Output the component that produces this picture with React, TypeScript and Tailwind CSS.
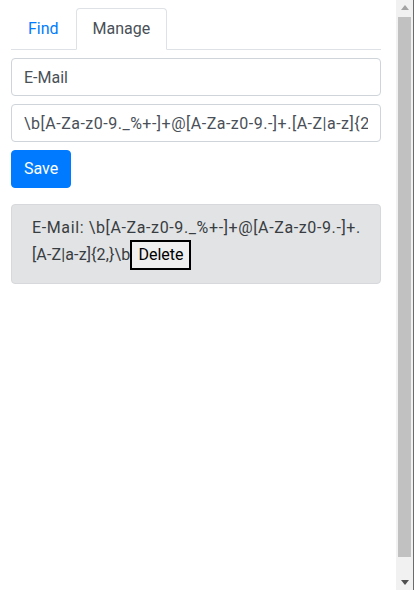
import React from "react";

export default function App() {
  const font = { fontFamily: '"Segoe UI", Roboto, "Noto Sans", sans-serif' };
  return (
    <div className="flex h-[590px] w-[417px] bg-white overflow-hidden" style={font}>
      <div className="w-[396px] h-full pl-[11px] pr-[15px] pt-[8px]">
        <div className="flex border-b border-[#dee2e6] h-[42px]">
          <div className="px-4 h-[41px] flex items-center text-[16px] text-[#007bff] border border-transparent">Find</div>
          <div className="px-4 h-[42px] flex items-center text-[16px] text-[#495057] bg-white border border-[#dee2e6] border-b-white rounded-t-[4px]">
            Manage
          </div>
        </div>
        <input
          className="mt-[8px] block w-full h-[38px] px-[12px] border border-[#ced4da] rounded-[4px] text-[16px] text-[#495057] outline-none"
          defaultValue="E-Mail"
          readOnly
        />
        <input
          className="mt-[8px] block w-full h-[38px] px-[12px] border border-[#ced4da] rounded-[4px] text-[16px] text-[#495057] outline-none tracking-[0.5px]"
          defaultValue="\b[A-Za-z0-9._%+-]+@[A-Za-z0-9.-]+.[A-Z|a-z]{2,}\b"
          readOnly
        />
        <button className="mt-[8px] h-[38px] px-[12px] bg-[#007bff] text-white text-[16px] rounded-[4px] border border-[#007bff]">
          Save
        </button>
        <div className="mt-[16px] bg-[#e2e3e5] border border-[#d6d8db] rounded-[4px] px-[20px] pt-[11px] pb-[13px] text-[16px] text-[#383d41] leading-[24px]">
          <div className="tracking-[0.62px] whitespace-nowrap">E-Mail: \b[A-Za-z0-9._%+-]+@[A-Za-z0-9.-]+.</div>
          <div className="flex items-center h-[30px]">
            <span className="tracking-[0.13px] whitespace-nowrap">[A-Z|a-z]{"{2,}"}\b</span>
            <button className="h-[30px] px-[6px] bg-[#efefef] border-2 border-black text-black text-[16px] leading-[20px]">
              Delete
            </button>
          </div>
        </div>
      </div>
      <div className="w-[17px] h-full bg-[#f1f1f1] flex flex-col items-center">
        <div className="h-[15px] flex items-center justify-center">
          <svg width="8" height="5" viewBox="0 0 8 5"><path d="M4 0 L8 5 L0 5 Z" fill="#a3a3a3" /></svg>
        </div>
        <div className="w-[13px] flex-1 bg-[#c1c1c1] mt-[2px] mb-[18px]" />
        <div className="h-[15px] flex items-center justify-center">
          <svg width="8" height="5" viewBox="0 0 8 5"><path d="M0 0 L8 0 L4 5 Z" fill="#505050" /></svg>
        </div>
      </div>
      <div className="w-px h-full bg-[#6b6b6b]" />
      <div className="flex-1 h-full bg-white" />
    </div>
  );
}
